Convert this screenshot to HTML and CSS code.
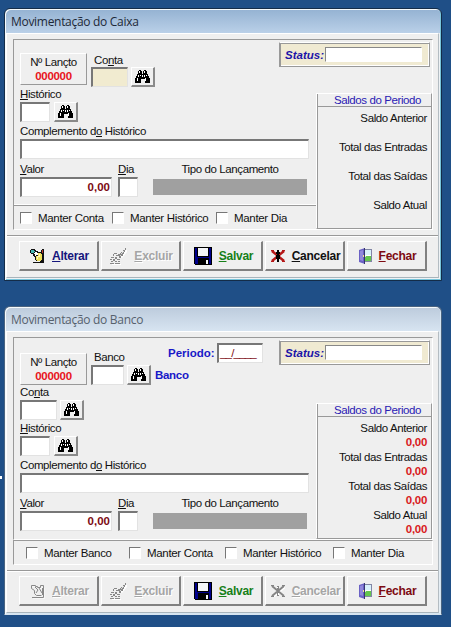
FILE: index.html
```html
<!DOCTYPE html>
<html lang="pt-BR">
<head>
<meta charset="utf-8">
<title>Movimentação</title>
<link rel="stylesheet" href="styles.css">
</head>
<body>
<svg class="defs" width="0" height="0">
  <symbol id="find" viewBox="0 0 15 13">
    <path fill="#000" d="M4 0h2v1h1v3h1V1h1V0h2v1h1v3h1v2h1v2h1v5h-5V9H6v4H0V8h1V6h1V4h1V1h1z"/>
    <path fill="#fff" d="M4 1h1v2H4zM9 1h1v2H9zM3 5h1v2H3zM2 8h1v3H2zM9 5h1v2H9zM10 8h1v3h-1zM7 5h1v2H7zM5 5h1v1H5zM11 5h1v1h-1z"/>
  </symbol>
  <symbol id="edit" viewBox="0 0 15 15">
    <path fill="#111" d="M1 0h4v1h1v1h2v1h3V1h1V0h2v14H3v-1h7v-1H6v-1H5V8H4V7H3V5H1V4H0V1h1z"/>
    <path fill="#45b5b0" d="M1 1h3v1h1v1H4v1H1z"/>
    <path fill="#fff" d="M5 3h2v1h1v2H6v1H5V5H4V4h1z"/>
    <path fill="#eedf58" d="M8 4h3v1h1v6h-1v1H7v-1H6V7h2z"/>
    <path fill="#fff6b0" d="M9 5h1v3H8v2H7V7h2z"/>
    <path fill="#c43a28" d="M12 1h1v3h-1z"/>
    <path fill="#efefef" d="M0 8h4v5H0z"/>
  </symbol>
  <symbol id="edit-off" viewBox="0 0 15 15">
    <path fill="none" stroke="#fff" d="M2 2h4l2 2h6v11H3M5 10l2 2h5"/>
    <path fill="none" stroke="#888" d="M1.500 1.500h4v1h2v1h3v-2h3v12H2M1.500 1.500v3l3 2v3l2 2h5M5 3l3 3-2 3M9 4l3 5M12.500 4v7"/>
  </symbol>
  <symbol id="erase" viewBox="0 0 17 17">
    <path fill="#fff" d="M16 2h1v2l-5 6-3-2zM2 16h9v1H2z"/>
    <path fill="#888" d="M15 0h1v2h-1v2h-1v2h-1v2h-2v2H9V8H8V6h2V5h1V4h2V2h2z"/>
    <path fill="#ddd" d="M13 3h1v1h-1v1h-1v1h-1V5h1V4h1zM10 7h1v1h-1z"/>
    <path fill="#888" d="M4 5h3v1H4zM3 6h1v2H3zM6 7h2v1H6zM1 9h3v1H1zM5 9h2v2H5zM0 11h2v1H0zM3 11h2v2H3zM7 11h3v1H7zM1 13h2v1H1zM5 13h2v1H5zM8 13h2v1H8zM0 15h4v1H0zM5 15h5v1H5z"/>
  </symbol>
  <symbol id="save" viewBox="0 0 18 18">
    <path fill="#000" d="M0 0h18v18H1v-1H0z"/>
    <path fill="#00008b" d="M1 1h2v9h12V1h2v16h-2v-6H4v6H1z"/>
    <path fill="#f4f6f8" d="M4 1h10v8H4z"/>
    <path fill="#f4f6f8" d="M12 13h2v4h-2z"/>
  </symbol>
  <symbol id="cancel" viewBox="0 0 14 12">
    <path fill="none" stroke="#b51717" stroke-width="2.400" d="M1 1l12 10M13 1L1 11"/>
    <path fill="#000" d="M6 0h2v2h1v2H8v1h1v4H8v3H6V9H5V5h1V4H5V2h1z"/>
    <path stroke="#b51717" stroke-width="1.300" d="M0 .7h3M11 .7h3M0 11.300h3M11 11.300h3"/>
  </symbol>
  <symbol id="cancel-off" viewBox="0 0 14 12">
    <path fill="none" stroke="#fff" stroke-width="2" d="M2 2l12 10M14 2L2 12"/>
    <path fill="none" stroke="#858585" stroke-width="2" d="M1 1l12 10M13 1L1 11M7 1v10"/>
    <path stroke="#858585" d="M0 .5h3M11 .5h3M0 11.500h3M11 11.500h3"/>
    <path fill="#fff" d="M6 2h1v1H6zM7 8h1v2H7z"/>
  </symbol>
  <symbol id="door" viewBox="0 0 13 16">
    <path fill="#8186a5" d="M5 1h8v13H5z"/>
    <path fill="#d9f1fb" d="M6 2h6v6H6z"/>
    <path fill="#fff" d="M6 7h6v2H6z"/>
    <path fill="#64c64e" d="M7 8h5v5H6v-3z"/>
    <path fill="#6a61c4" d="M0 2l6-2v16l-6-2z"/>
    <path fill="#9188dc" d="M1 3l3-1v11l-3-1z"/>
    <path fill="#36346f" d="M5 0h1v16H5z"/>
    <path fill="#f3e58c" d="M4 7h1v2H4z"/>
  </symbol>
</svg>

<main class="desktop">
  <section class="window caixa">
    <h1 class="title">Movimentação do Caixa</h1>
    <div class="client">
      <div class="form">
        <div class="top">
          <div class="number"><span>Nº Lançto</span><b>000000</b></div>
          <div class="field account"><label>Co<u>n</u>ta</label>
            <div class="controls"><span class="input locked w37"></span><button class="find"><svg><use href="#find"/></svg></button></div>
          </div>
          <div class="status"><b>Status:</b><span></span></div>
        </div>
        <div class="lower">
          <div class="left">
            <div class="fields">
              <div class="field"><label><u>H</u>istórico</label>
                <div class="controls"><span class="input w30"></span><button class="find"><svg><use href="#find"/></svg></button></div>
              </div>
              <div class="field"><label>Complemento d<u>o</u> Histórico</label><span class="input w289"></span></div>
              <div class="values">
                <div class="field"><label><u>V</u>alor</label><span class="input w92">0,00</span></div>
                <div class="field day"><label><u>D</u>ia</label><span class="input w20"></span></div>
                <div class="field kind"><label>Tipo do Lançamento</label><span class="bar"></span></div>
              </div>
            </div>
            <div class="keep">
              <label><i></i>Manter Conta</label><label><i></i>Manter Histórico</label><label><i></i>Manter Dia</label>
            </div>
          </div>
          <aside class="balances">
            <h2>Saldos do Periodo</h2>
            <p>Saldo Anterior</p>
            <p>Total das Entradas</p>
            <p>Total das Saídas</p>
            <p>Saldo Atual</p>
          </aside>
        </div>
      </div>
      <div class="actions">
        <button class="navy"><svg width="15" height="15"><use href="#edit"/></svg><span><u>A</u>lterar</span></button>
        <button class="off"><svg width="17" height="17"><use href="#erase"/></svg><span><u>E</u>xcluir</span></button>
        <button class="green"><svg width="18" height="18"><use href="#save"/></svg><span><u>S</u>alvar</span></button>
        <button><svg width="14" height="12"><use href="#cancel"/></svg><span><u>C</u>ancelar</span></button>
        <button class="maroon"><svg width="13" height="16"><use href="#door"/></svg><span><u>F</u>echar</span></button>
      </div>
    </div>
  </section>

  <section class="window banco">
    <h1 class="title">Movimentação do Banco</h1>
    <div class="client">
      <div class="form">
        <div class="top">
          <div class="number"><span>Nº Lançto</span><b>000000</b></div>
          <div class="field account"><label>Banco</label>
            <div class="controls"><span class="input w33"></span><button class="find"><svg><use href="#find"/></svg></button><b class="bank">Banco</b></div>
          </div>
          <div class="period"><b>Periodo:</b><span class="input w46">__/____</span></div>
          <div class="status"><b>Status:</b><span></span></div>
        </div>
        <div class="lower">
          <div class="left">
            <div class="fields">
              <div class="field"><label>Co<u>n</u>ta</label>
                <div class="controls"><span class="input w37"></span><button class="find"><svg><use href="#find"/></svg></button></div>
              </div>
              <div class="field"><label><u>H</u>istórico</label>
                <div class="controls"><span class="input w30"></span><button class="find"><svg><use href="#find"/></svg></button></div>
              </div>
              <div class="field"><label>Complemento d<u>o</u> Histórico</label><span class="input w289"></span></div>
              <div class="values">
                <div class="field"><label><u>V</u>alor</label><span class="input w92">0,00</span></div>
                <div class="field day"><label><u>D</u>ia</label><span class="input w20"></span></div>
                <div class="field kind"><label>Tipo do Lançamento</label><span class="bar"></span></div>
              </div>
            </div>
          </div>
          <aside class="balances">
            <h2>Saldos do Periodo</h2>
            <p>Saldo Anterior<b>0,00</b></p>
            <p>Total das Entradas<b>0,00</b></p>
            <p>Total das Saídas<b>0,00</b></p>
            <p>Saldo Atual<b>0,00</b></p>
          </aside>
        </div>
      </div>
      <div class="keep">
        <label><i></i>Manter Banco</label><label><i></i>Manter Conta</label><label><i></i>Manter Histórico</label><label><i></i>Manter Dia</label>
      </div>
      <div class="actions">
        <button class="off"><svg width="15" height="15"><use href="#edit-off"/></svg><span><u>A</u>lterar</span></button>
        <button class="off"><svg width="17" height="17"><use href="#erase"/></svg><span><u>E</u>xcluir</span></button>
        <button class="green"><svg width="18" height="18"><use href="#save"/></svg><span><u>S</u>alvar</span></button>
        <button class="off"><svg width="14" height="12"><use href="#cancel-off"/></svg><span><u>C</u>ancelar</span></button>
        <button class="maroon"><svg width="13" height="16"><use href="#door"/></svg><span><u>F</u>echar</span></button>
      </div>
    </div>
  </section>
</main>
</body>
</html>
```
FILE: styles.css
```css
* { box-sizing: border-box; }
body {
  margin: 0;
  background: #fff;
  font: 11.5px/14px "Liberation Sans", Arial, sans-serif;
  letter-spacing: -0.4px;
  color: #111;
}
h1, h2, p { margin: 0; font-size: inherit; font-weight: normal; }
b { letter-spacing: -0.3px; }
u { text-underline-offset: 1px; text-decoration-thickness: 1px; }
button { font: inherit; letter-spacing: inherit; color: inherit; padding: 0; margin: 0; }
.defs { display: none; }
label { white-space: nowrap; }

.desktop {
  position: relative;
  width: 451px;
  height: 627px;
  padding: 8px 0 0 4px;
  background: #1f4f87;
  overflow: hidden;
}
/* edge of a desktop item */
.desktop::before {
  content: "";
  position: absolute;
  left: 0;
  top: 476px;
  width: 2px;
  height: 3px;
  background: #fff;
}

.window {
  width: 438px;
  border: 1px solid #142c48;
  border-radius: 6px 6px 0 0;
  padding: 0 2px 0 1px;
  background: #e9eff4;
}
.caixa {
  height: 273px;
  margin-bottom: 25px;
  background: linear-gradient(#94b2d2, #bad0e8 24px, #eef2f5 24px);
  box-shadow: inset 1px 1px #f6fafc, inset -1px -1px #78c5da;
}
.banco {
  height: 309px;
  border-color: #4b6480;
  border-bottom-color: #d7e4ef;
  background: linear-gradient(#bccbdc, #d7e4f1 24px, #e4edf4 24px);
  box-shadow: inset 1px 1px #f6fafc, inset -1px -1px #d5e5f2;
}
.title {
  height: 24px;
  padding: 1px 0 0 5px;
  font: 12px/23px "Open Sans", sans-serif;
  letter-spacing: -0.3px;
  color: #1d2938;
}
.banco .title { color: #56616d; }
.client {
  width: 433px;
  background: #efefef;
  border: 1px solid #fff;
  border-right-color: #b4bcc2;
  border-bottom-color: #a8b4bb;
  padding: 5px 0 0 6px;
}
.caixa .client { height: 245px; }
.banco .client { height: 282px; }

.form {
  width: 420px;
  border: 1px solid #fff;
  border-top-color: #999;
  border-left-color: #999;
}
.caixa .form { height: 191px; }
.banco .form { height: 203px; }
.top { display: flex; height: 47px; padding-left: 6px; }
.top > * { flex: none; }
.number {
  width: 67px;
  height: 32px;
  margin-top: 13px;
  border: 1px solid #fff;
  border-right-color: #999;
  border-bottom-color: #999;
  text-align: center;
  padding-top: 1px;
}
.banco .number { margin-top: 15px; }
.number span, .number b { display: block; white-space: nowrap; }
.number b { color: #e8141c; }

.field { display: flex; flex-direction: column; align-items: flex-start; }
.field > label { height: 15px; }
.controls { display: flex; gap: 3px; }
.account { margin: 13px 0 0 4px; }
.account > label { padding-left: 3px; }
.banco .account { margin-top: 12px; width: 98px; }
.input {
  display: block;
  flex: none;
  height: 20px;
  background: #fff;
  border: 1px solid #e2e2e2;
  border-top: 2px solid #777;
  border-left: 2px solid #777;
  font-weight: bold;
  letter-spacing: 0;
  line-height: 17px;
  text-align: right;
  padding-right: 1px;
  color: #7d0a12;
}
.locked { background: #f1ebd0; }
.w20 { width: 20px; }
.w30 { width: 30px; margin-right: 1px; }
.w33 { width: 33px; }
.w37 { width: 37px; }
.w46 { width: 46px; }
.w92 { width: 92px; }
.w289 { width: 289px; }
.find {
  display: flex;
  flex: none;
  align-items: center;
  justify-content: center;
  width: 24px;
  height: 20px;
  background: #efefef;
  border: 1px solid #fff;
  border-right: 2px solid #8a8a8a;
  border-bottom: 2px solid #8a8a8a;
}
.find svg { width: 15px; height: 13px; }
.bank { color: #1818c8; line-height: 20px; padding-left: 1px; }
.period { display: flex; width: 95px; margin: 5px 0 0 -21px; color: #1818c8; }
.period b { line-height: 20px; width: 49px; letter-spacing: 0; }
.period .input { font-weight: normal; text-align: left; letter-spacing: -0.8px; padding-left: 1px; }

.status {
  display: flex;
  width: 151px;
  height: 25px;
  margin: 2px 2px 0 auto;
  padding: 3px 5px 3px 5px;
  background: #f0ead2;
  border: 1px solid #999;
  border-top-color: #fff;
  box-shadow: inset 1px 1px #999, inset -1px -1px #fff;
}
.status b { width: 40px; line-height: 18px; font-style: italic; letter-spacing: 0; color: #1c14a8; }
.status span { width: 97px; height: 15px; margin-top: 1px; background: #fff; border: 1px solid #fff; border-top-color: #888; border-left-color: #888; }

.lower { display: flex; }
.left { width: 302px; }
.fields { display: grid; grid-template-rows: 37px 38px 43px; padding-left: 6px; }
.banco .fields { grid-template-rows: 36px 37px 38px 43px; }
.values { display: flex; }
.day { margin-left: 6px; }
.kind { margin-left: 15px; align-items: center; }
.bar { width: 154px; height: 16px; margin-top: 2px; background: #a0a0a0; }

.keep {
  display: grid;
  align-items: center;
  height: 24px;
  border-top: 1px solid #999;
  grid-template-columns: 92px 104px auto;
  padding: 1px 0 0 6px;
  letter-spacing: -0.33px;
}
.caixa .keep { box-shadow: 0 -1px #fff; }
.banco .keep {
  width: 420px;
  height: 25px;
  border: 1px solid #fff;
  border-top-color: #999;
  border-left-color: #999;
  grid-template-columns: 103px 96px 108px auto;
  padding: 0 0 0 12px;
}
.keep label { display: flex; align-items: center; gap: 6px; }
.keep i { width: 12px; height: 12px; background: #fff; border: 1px solid #fff; border-top: 1px solid #777; border-left: 1px solid #777; }

.balances {
  width: 116px;
  height: 136px;
  margin-top: 6px;
  border: 1px solid #999;
  border-top-color: #fff;
  border-left-color: #fff;
  box-shadow: inset 1px 0 #999;
  text-align: right;
}
.banco .balances { margin-top: 18px; }
.balances h2 {
  height: 13px;
  margin-left: 1px;
  border-bottom: 1px solid #999;
  line-height: 13px;
  text-align: center;
  padding-left: 6px;
  color: #2a20b4;
}
.balances p { height: 29px; padding: 0 4px 0 0; }
.balances h2 + p { margin-top: 4px; }
.balances b { display: block; color: #d81820; }

.actions {
  display: flex;
  gap: 2px;
  margin: 5px 0 0 -6px;
  padding: 5px 0 0 12px;
  border-top: 1px solid #999;
  box-shadow: inset 0 1px #fff;
}
.actions button {
  display: flex;
  flex: none;
  align-items: center;
  justify-content: center;
  gap: 7px;
  width: 80px;
  height: 30px;
  padding: 1px 0 0 2px;
  background: #efefef;
  border: 1px solid #fff;
  border-right: 2px solid #808080;
  border-bottom: 2px solid #808080;
  font-size: 12px;
  font-weight: bold;
  letter-spacing: -0.25px;
}
.actions svg { flex: none; overflow: visible; }
.actions .navy { color: #15157c; }
.actions .green { color: #168018; }
.actions .maroon { color: #7d0a12; }
.actions .off { color: #a5a5a5; text-shadow: 1px 1px #fff; }
```
